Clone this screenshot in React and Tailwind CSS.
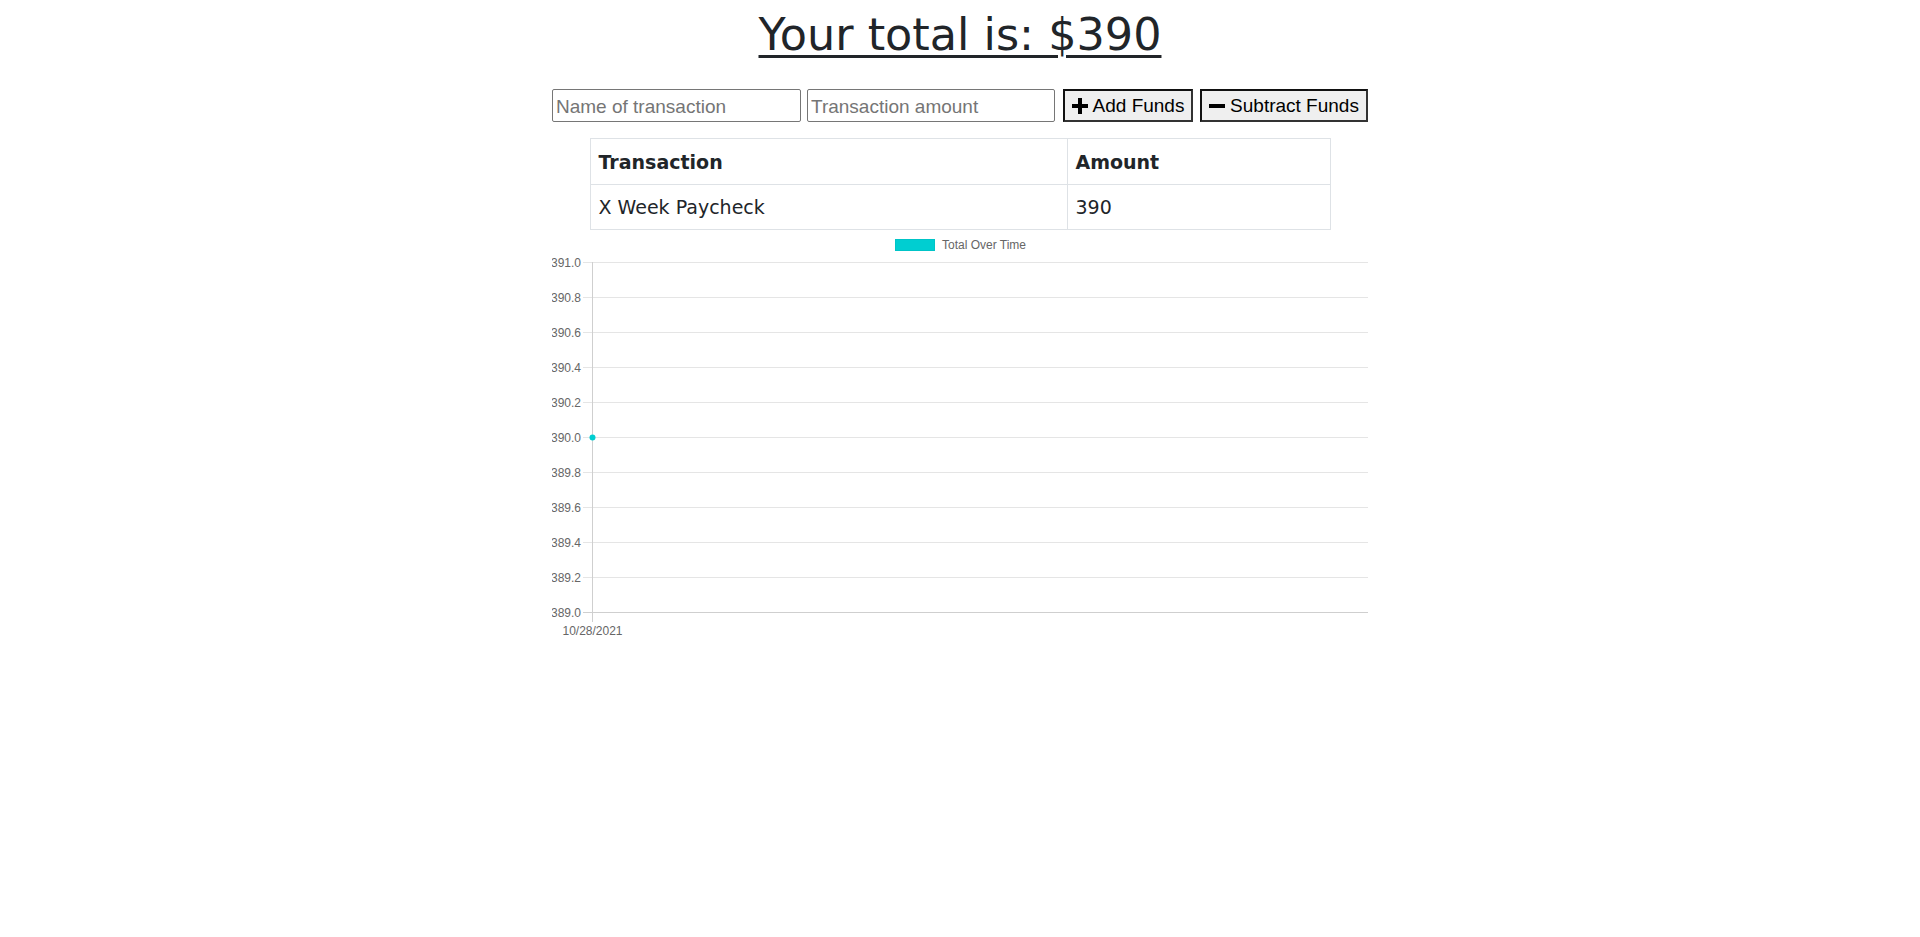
import React from 'react';

const ticks = ['391.0', '390.8', '390.6', '390.4', '390.2', '390.0', '389.8', '389.6', '389.4', '389.2', '389.0'];

const PlusIcon = () => (
  <svg width="16" height="16" viewBox="0 0 16 16" className="mr-[5px]">
    <rect x="6" y="0" width="4" height="16" fill="#000" />
    <rect x="0" y="6" width="16" height="4" fill="#000" />
  </svg>
);

const MinusIcon = () => (
  <svg width="16" height="16" viewBox="0 0 16 16" className="mr-[5px]">
    <rect x="0" y="6" width="16" height="4" fill="#000" />
  </svg>
);

// line chart, drawn the way chart.js lays it out
const Chart = () => (
  <svg width="816" height="412" className="block" style={{ fontFamily: '"Liberation Sans", Arial, sans-serif' }}>
    {/* legend */}
    <rect x="343.5" y="9.5" width="39" height="11" fill="#00ced1" stroke="#00c4c7" />
    <text x="390" y="19" fontSize="12" fill="#666">Total Over Time</text>

    {/* grid */}
    {ticks.map((t, i) => (
      <g key={t}>
        <line x1="31" x2="816" y1={32.5 + i * 35} y2={32.5 + i * 35} stroke="#e5e5e5" />
        <text x="29" y={36.5 + i * 35} fontSize="12" fill="#666" textAnchor="end">{t}</text>
      </g>
    ))}
    <line x1="31" x2="816" y1="382.5" y2="382.5" stroke="#cfcfcf" />
    <line x1="40.5" x2="40.5" y1="32" y2="392" stroke="#cfcfcf" />

    {/* point */}
    <circle cx="40.5" cy="207.5" r="3" fill="#00ced1" />

    <text x="40.5" y="405" fontSize="12" fill="#666" textAnchor="middle">10/28/2021</text>
  </svg>
);

const App = () => {
  return (
    <div className="bg-white min-h-screen w-full text-[#212529]" style={{ fontFamily: '"DejaVu Sans", Verdana, sans-serif' }}>
      {/* Header */}
      <h1 className="text-center text-[44.5px] leading-[1.2] pt-[8px] underline decoration-[3px] underline-offset-[5px]">
        Your total is: $390
      </h1>

      {/* Form */}
      <div className="flex justify-center mt-[28px] h-[33px] text-[19px]" style={{ fontFamily: '"Liberation Sans", Arial, sans-serif' }}>
        <input
          type="text"
          placeholder="Name of transaction"
          className="w-[249px] h-[33px] border border-[#767676] rounded-[2px] px-[3px] pt-[2px] placeholder:text-[#757575] outline-none"
        />
        <input
          type="number"
          placeholder="Transaction amount"
          className="w-[248px] h-[33px] ml-[6px] border border-[#767676] rounded-[2px] px-[3px] pt-[2px] placeholder:text-[#757575] outline-none"
        />
        <button className="ml-[8px] w-[130px] h-[33px] flex items-center justify-center bg-[#efefef] border-2 border-t-[#111] border-l-[#111] border-r-[#333] border-b-[#333] text-black">
          <PlusIcon />
          Add Funds
        </button>
        <button className="ml-[7px] w-[168px] h-[33px] flex items-center justify-center bg-[#efefef] border-2 border-t-[#111] border-l-[#111] border-r-[#333] border-b-[#333] text-black">
          <MinusIcon />
          Subtract Funds
        </button>
      </div>

      {/* Transactions */}
      <table className="mx-auto mt-[16px] w-[741px] border-collapse text-[19px]">
        <thead>
          <tr className="h-[46px]">
            <th className="w-[477px] border border-[#dee2e6] px-[8px] text-left font-bold">Transaction</th>
            <th className="border border-[#dee2e6] px-[8px] text-left font-bold">Amount</th>
          </tr>
        </thead>
        <tbody>
          <tr className="h-[45px]">
            <td className="border border-[#dee2e6] px-[8px]">X Week Paycheck</td>
            <td className="border border-[#dee2e6] px-[8px]">390</td>
          </tr>
        </tbody>
      </table>

      {/* Chart */}
      <div className="flex justify-center">
        <Chart />
      </div>
    </div>
  );
};

export default App;
